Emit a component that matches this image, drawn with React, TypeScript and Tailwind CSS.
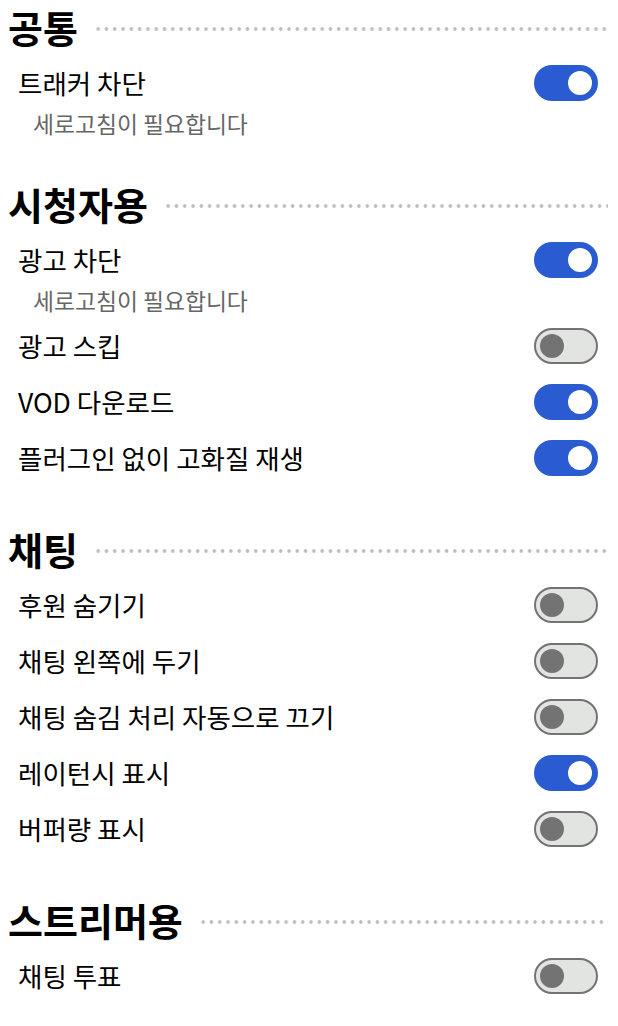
import React, { useState } from "react";

type Item = { label: string; on: boolean; note?: string };
type Section = { title: string; items: Item[] };

const sections: Section[] = [
  {
    title: "공통",
    items: [{ label: "트래커 차단", on: true, note: "세로고침이 필요합니다" }],
  },
  {
    title: "시청자용",
    items: [
      { label: "광고 차단", on: true, note: "세로고침이 필요합니다" },
      { label: "광고 스킵", on: false },
      { label: "VOD 다운로드", on: true },
      { label: "플러그인 없이 고화질 재생", on: true },
    ],
  },
  {
    title: "채팅",
    items: [
      { label: "후원 숨기기", on: false },
      { label: "채팅 왼쪽에 두기", on: false },
      { label: "채팅 숨김 처리 자동으로 끄기", on: false },
      { label: "레이턴시 표시", on: true },
      { label: "버퍼량 표시", on: false },
    ],
  },
  {
    title: "스트리머용",
    items: [{ label: "채팅 투표", on: false }],
  },
];

const Toggle = ({ on, onClick }: { on: boolean; onClick: () => void }) => {
  return (
    <button
      onClick={onClick}
      className={
        on
          ? "flex h-[36px] w-[64px] items-center justify-end rounded-full bg-[#2b5bd0] px-[6px]"
          : "flex h-[36px] w-[64px] items-center justify-start rounded-full border-2 border-[#737373] bg-[#e2e4e1] px-[4px]"
      }
    >
      <span
        className={
          on
            ? "block h-[24px] w-[24px] rounded-full bg-white"
            : "block h-[24px] w-[24px] rounded-full bg-[#737373]"
        }
      />
    </button>
  );
};

const App = () => {
  const [state, setState] = useState(
    sections.map((s) => s.items.map((i) => i.on))
  );

  const flip = (si: number, ii: number) => {
    setState((prev) =>
      prev.map((row, a) => (a === si ? row.map((v, b) => (b === ii ? !v : v)) : row))
    );
  };

  return (
    <div className="min-h-screen bg-white pt-[4px] pl-[8px] pr-[10px] font-['Noto_Sans_CJK_KR','Noto_Sans',sans-serif] text-black">
      {sections.map((section, si) => (
        <div key={section.title} className={si > 0 ? "mt-[40px]" : ""}>
          <div className="flex h-[46px] items-center">
            <h2 className="text-[38px] font-bold leading-none">{section.title}</h2>
            <div className="ml-[16px] mt-[4px] h-[4px] flex-1 bg-[radial-gradient(circle,#bdbdbd_1.5px,transparent_2.1px)] bg-[length:8.3px_4px] bg-repeat-x" />
          </div>
          <div className="mt-[5px] pl-[10px] pr-[10px]">
            {section.items.map((item, ii) => (
              <div key={item.label}>
                <div className="flex h-[56px] items-center justify-between">
                  <span className="text-[26.5px] leading-none">{item.label}</span>
                  <Toggle on={state[si][ii]} onClick={() => flip(si, ii)} />
                </div>
                {item.note && (
                  <div className="h-[30px] pl-[15px] text-[22.8px] leading-[26px] text-[#666666]">
                    {item.note}
                  </div>
                )}
              </div>
            ))}
          </div>
        </div>
      ))}
    </div>
  );
};

export default App;
